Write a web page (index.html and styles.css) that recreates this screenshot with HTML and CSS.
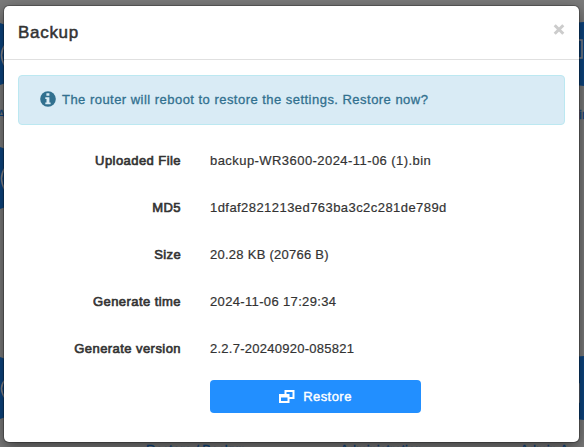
FILE: index.html
```html
<!DOCTYPE html>
<html lang="en">
<head>
<meta charset="utf-8">
<title>Backup</title>
<link rel="stylesheet" href="styles.css">
</head>
<body>
<svg class="backdrop" width="584" height="447" viewBox="0 0 584 447" aria-hidden="true">
  <g fill="#0d4580">
    <circle cx="-8" cy="54" r="32"/><circle cx="-8" cy="178" r="32"/><circle cx="-8" cy="388" r="32"/>
    <circle cx="584" cy="54" r="32"/><circle cx="584" cy="388" r="32"/>
  </g>
  <g fill="none" stroke="#85858a" stroke-width="1.5">
    <path d="M5 45Q-2 55 5 66M5 168Q-2 178 5 190M5 380Q-2 388 5 398"/>
    <path d="M578 40h4v18h-4M578 384h1v18h-1"/>
  </g>
  <g class="tile-label">
    <text x="-3" y="119">A</text><text x="579" y="119">in</text>
    <text x="146" y="454">Restore / Backup</text><text x="340" y="454">Administration</text><text x="520" y="454">Admin A</text>
  </g>
</svg>
<main class="modal">
  <header class="modal-header">
    <h1 class="title"><span>Backup</span></h1>
    <button class="close" aria-label="Close"><svg width="12" height="11" viewBox="0 0 12 11"><path d="M1.7 1.2 10.3 9.8M10.3 1.2 1.7 9.8" stroke="#ccc" stroke-width="3"/></svg></button>
  </header>
  <section class="modal-body">
    <div class="alert">
      <svg class="info" width="16" height="16" viewBox="0 0 16 16"><circle cx="8" cy="8" r="7.8" fill="#31708f"/><path d="M6.4 2.3h3v2.4h-3zM5.3 6.2h4.1v5.2h1.2v1.8H5.3v-1.8h1.2V8H5.3z" fill="#d9ebf5"/></svg>
      <span class="alert-text">The router will reboot to restore the settings. Restore now?</span>
    </div>
    <dl class="details">
      <dt><span class="wide">Uploaded File</span></dt><dd><span class="wide">backup-WR3600-2024-11-06 (1).bin</span></dd>
      <dt><span class="wide">MD5</span></dt><dd><span class="wide">1dfaf2821213ed763ba3c2c281de789d</span></dd>
      <dt><span class="medium">Size</span></dt><dd><span class="narrow">20.28 KB (20766 B)</span></dd>
      <dt><span class="wide">Generate time</span></dt><dd><span class="medium">2024-11-06 17:29:34</span></dd>
      <dt><span class="wide">Generate version</span></dt><dd><span class="narrow">2.2.7-20240920-085821</span></dd>
    </dl>
    <button class="restore">
      <svg width="16" height="14" viewBox="0 0 16 14"><path fill="#fff" fill-rule="evenodd" d="M5.5 0H15.5V9H10.5V13H0V4H5.5zM7.5 2V4H10.5V7H13.5V2zM2 7.5V11H8.5V7.5z"/></svg>
      <span>Restore</span>
    </button>
  </section>
</main>
</body>
</html>
```
FILE: styles.css
```css
* { box-sizing: border-box; }
body {
  margin: 0;
  width: 584px;
  height: 447px;
  padding: 6px 5px 5px 4px;
  overflow: hidden;
  background: #7b7b7b;
  font: 13px/20px "Liberation Sans", Arial, sans-serif;
  color: #333;
}
.backdrop { position: absolute; left: 0; top: 0; }
.tile-label { fill: #0d4580; font-size: 13px; stroke: #0d4580; stroke-width: .3px; }
.modal {
  position: relative;
  height: 436px;
  background: #fff;
  border-radius: 5px;
  box-shadow: 0 0 0 1px rgba(0,0,0,.25), 0 5px 15px rgba(0,0,0,.5);
}
.modal-header {
  height: 54px;
  display: flex;
  align-items: center;
  justify-content: space-between;
  padding: 0 14px;
  border-bottom: 1px solid #e0e0e0;
}
.title {
  margin: 0;
  font-size: 17px;
  font-weight: 400;
  letter-spacing: .7px;
  -webkit-text-stroke: .5px #333;
}
button { font: inherit; border: 0; cursor: pointer; }
.close { padding: 0; margin: 0 0 6px; background: none; display: flex; }
.modal-body { padding: 15px 14px 0; }
.alert {
  height: 50px;
  display: flex;
  align-items: center;
  gap: 6px;
  padding: 0 21px;
  border: 1px solid #bce8f1;
  border-radius: 4px;
  background: #d9ebf5;
  color: #31708f;
}
.info { margin-bottom: 2px; }
.alert-text { letter-spacing: .47px; -webkit-text-stroke: .3px #31708f; }
.details {
  display: grid;
  grid-template-columns: 163px 1fr;
  grid-auto-rows: 47px;
  column-gap: 29px;
  margin: 12px 0 0;
  align-items: center;
}
.details dt { text-align: right; -webkit-text-stroke: .65px #333; }
.details dd { margin: 0; -webkit-text-stroke: .2px #333; }
.details span { white-space: nowrap; }
.wide { letter-spacing: .44px; }
.medium { letter-spacing: .35px; }
.narrow { letter-spacing: .26px; }
.restore {
  display: flex;
  align-items: center;
  justify-content: center;
  gap: 8px;
  width: 211px;
  height: 33px;
  margin: 8px 0 0 192px;
  padding: 0;
  border-radius: 4px;
  background: #228fff;
  color: #fff;
  letter-spacing: .45px;
  -webkit-text-stroke: .4px #fff;
}
```
